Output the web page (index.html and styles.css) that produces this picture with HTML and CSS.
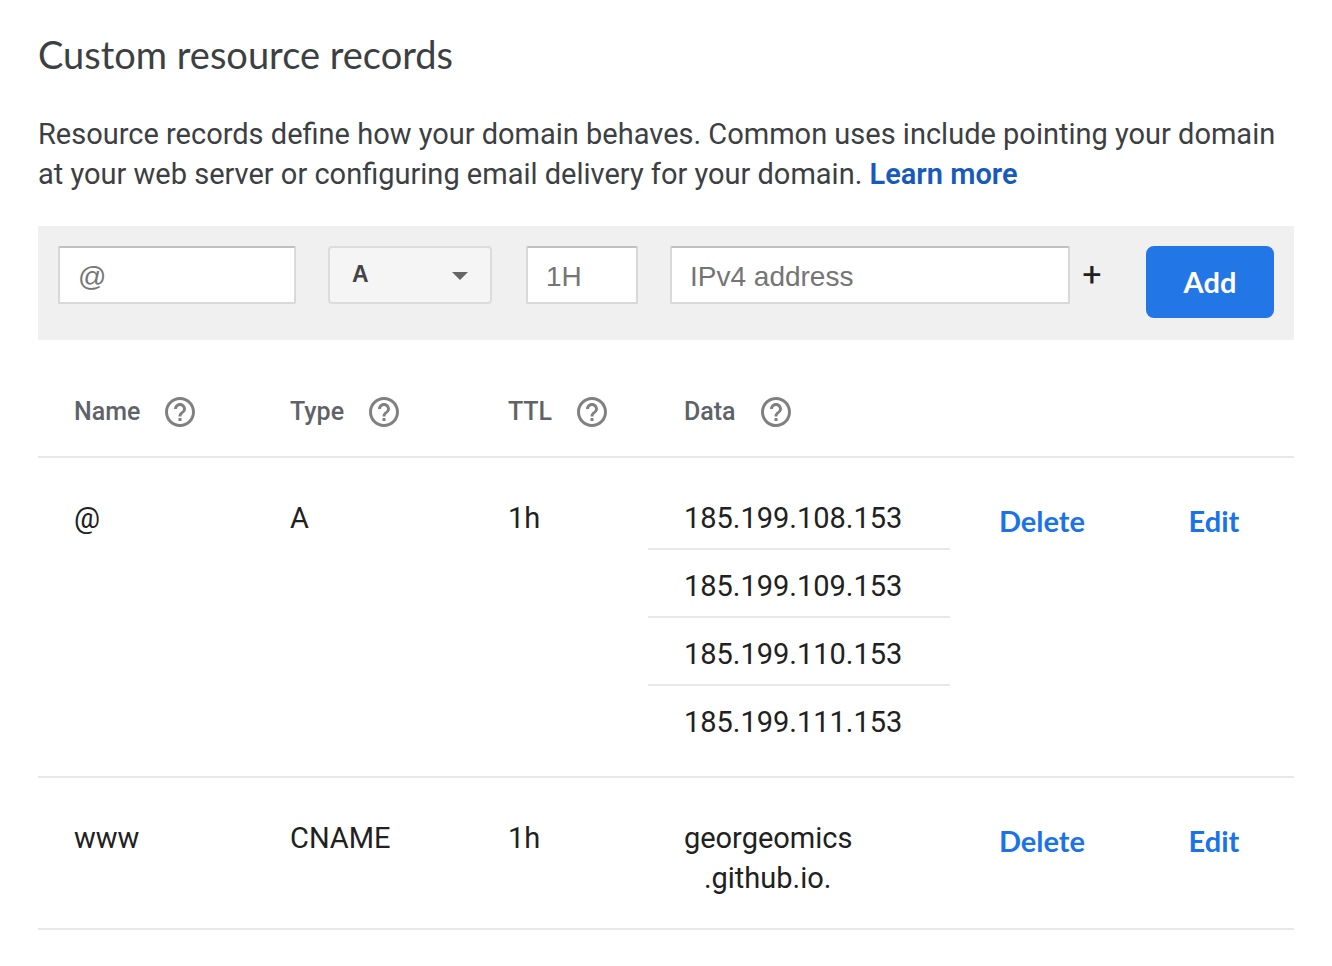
FILE: index.html
```html
<!DOCTYPE html>
<html lang="en">
<head>
<meta charset="utf-8">
<meta name="viewport" content="width=device-width, initial-scale=1">
<title>Custom resource records</title>
<link rel="stylesheet" href="styles.css">
</head>
<body>
<svg class="sprite" aria-hidden="true">
  <symbol id="help" viewBox="0 0 24 24"><path d="M11 18h2v-2h-2v2zm1-16C6.48 2 2 6.48 2 12s4.48 10 10 10 10-4.48 10-10S17.52 2 12 2zm0 18c-4.41 0-8-3.59-8-8s3.59-8 8-8 8 3.59 8 8-3.59 8-8 8zm0-14c-2.21 0-4 1.79-4 4h2c0-1.1.9-2 2-2s2 .9 2 2c0 2-3 1.75-3 5h2c0-2.25 3-2.5 3-5 0-2.21-1.79-4-4-4z"/></symbol>
</svg>
<main class="page">
  <h1 class="title">Custom resource records</h1>
  <p class="intro">Resource records define how your domain behaves. Common uses include pointing your domain at your web server or configuring email delivery for your domain. <a class="intro-link" href="#learn">Learn more</a></p>

  <form class="add-form">
    <input class="field field-name" type="text" placeholder="@" aria-label="Name">
    <div class="select-wrap">
      <select class="select" aria-label="Type">
        <option>A</option>
        <option>AAAA</option>
        <option>CNAME</option>
        <option>MX</option>
        <option>TXT</option>
      </select>
      <svg class="select-arrow" viewBox="0 0 16 8" aria-hidden="true"><path d="M0 0h16L8 8z"/></svg>
    </div>
    <input class="field field-ttl" type="text" placeholder="1H" aria-label="TTL">
    <input class="field field-data" type="text" placeholder="IPv4 address" aria-label="Data">
    <button class="plus" type="button" aria-label="Add another value">+</button>
    <button class="submit" type="submit">Add</button>
  </form>

  <table class="records">
    <colgroup>
      <col class="col-name"><col class="col-type"><col class="col-ttl"><col class="col-data"><col class="col-delete"><col class="col-edit">
    </colgroup>
    <thead>
      <tr>
        <th scope="col"><span class="head">Name <button class="help" type="button" aria-label="About name"><svg class="help-icon"><use href="#help"/></svg></button></span></th>
        <th scope="col"><span class="head">Type <button class="help" type="button" aria-label="About type"><svg class="help-icon"><use href="#help"/></svg></button></span></th>
        <th scope="col"><span class="head">TTL <button class="help" type="button" aria-label="About TTL"><svg class="help-icon"><use href="#help"/></svg></button></span></th>
        <th scope="col"><span class="head">Data <button class="help" type="button" aria-label="About data"><svg class="help-icon"><use href="#help"/></svg></button></span></th>
        <td></td>
        <td></td>
      </tr>
    </thead>
    <tbody>
      <tr>
        <td class="cell">@</td>
        <td class="cell">A</td>
        <td class="cell">1h</td>
        <td class="cell-list">
          <ul class="values">
            <li class="value">185.199.108.153</li>
            <li class="value">185.199.109.153</li>
            <li class="value">185.199.110.153</li>
            <li class="value">185.199.111.153</li>
          </ul>
        </td>
        <td class="cell-action"><button class="action" type="button">Delete</button></td>
        <td class="cell-action"><button class="action" type="button">Edit</button></td>
      </tr>
      <tr>
        <td class="cell">www</td>
        <td class="cell">CNAME</td>
        <td class="cell">1h</td>
        <td class="cell">georgeomics<span class="continued">.github.io.</span></td>
        <td class="cell-action"><button class="action" type="button">Delete</button></td>
        <td class="cell-action"><button class="action" type="button">Edit</button></td>
      </tr>
    </tbody>
  </table>
</main>
</body>
</html>
```
FILE: styles.css
```css
* {
  box-sizing: border-box;
}

body {
  margin: 0;
  background: #fff;
  color: #212121;
  font-family: Roboto, "Liberation Sans", sans-serif;
  font-size: 29px;
  line-height: 40px;
}

button {
  border: 0;
  padding: 0;
  background: none;
  cursor: pointer;
}

.sprite {
  display: none;
}

.page {
  padding: 30px 38px;
}

.title {
  margin: 0 0 36px;
  color: #3c4043;
  font-family: Lato, sans-serif;
  font-size: 38px;
  font-weight: 400;
  line-height: 48px;
}

.intro {
  margin: 0 0 32px;
  padding-right: 16px;
  color: #3c4043;
}

.intro-link {
  color: #185abc;
  font-weight: 600;
  text-decoration: none;
}

.add-form {
  display: flex;
  align-items: flex-start;
  padding: 20px 20px 22px;
  background: #f0f0f0;
}

.field {
  height: 58px;
  min-width: 0;
  padding: 4px 18px 0;
  border: 2px solid #d9d9d9;
  border-top-color: #c0c0c0;
  border-radius: 2px;
  background: #fff;
  color: #212121;
  font-family: "Liberation Sans", Arial, sans-serif;
  font-size: 28px;
}

.field::placeholder {
  color: #757575;
  opacity: 1;
}

.field-name {
  flex: 1 1 238px;
}

.select-wrap {
  position: relative;
  flex: 0 0 164px;
  margin: 0 34px 0 32px;
}

.select {
  display: block;
  width: 100%;
  height: 58px;
  padding: 0 48px 2px 22px;
  border: 2px solid #dcdcdc;
  border-radius: 4px;
  appearance: none;
  background: #f5f5f5;
  color: #444;
  font-family: "Liberation Sans", Arial, sans-serif;
  font-size: 23px;
  font-weight: 700;
}

.select-arrow {
  position: absolute;
  top: 26px;
  right: 24px;
  width: 16px;
  height: 8px;
  fill: #666;
  pointer-events: none;
}

.field-ttl {
  flex: 0 0 112px;
}

.field-data {
  flex: 2 1 400px;
  margin-left: 32px;
}

.plus {
  flex: 0 0 44px;
  margin-right: 32px;
  height: 58px;
  padding-bottom: 2px;
  color: #212121;
  font-family: Roboto, sans-serif;
  font-size: 34px;
  font-weight: 400;
}

.submit {
  flex: 0 0 128px;
  height: 72px;
  padding-bottom: 2px;
  border-radius: 8px;
  background: #2376e5;
  color: #fff;
  font-family: Lato, sans-serif;
  font-size: 29px;
  font-weight: 700;
}

.records {
  width: 100%;
  border-collapse: collapse;
  table-layout: fixed;
}

.col-name { width: 17.2%; }
.col-type { width: 17.35%; }
.col-ttl { width: 14.01%; }
.col-data { width: 24.05%; }
.col-delete { width: 14.65%; }
.col-edit { width: 12.74%; }

.records tr {
  border-bottom: 2px solid #e8e8e8;
}

.records td {
  padding: 0;
  vertical-align: top;
}

.records th {
  padding: 54px 0 26px 36px;
  color: #5f6368;
  font-size: 25px;
  font-weight: 500;
  text-align: left;
}

.head {
  display: flex;
  align-items: center;
  gap: 22px;
  height: 36px;
}

.help {
  display: flex;
}

.help-icon {
  width: 36px;
  height: 36px;
  fill: #808080;
}

.records .cell {
  padding: 40px 0 30px 36px;
}

.records .cell-list {
  padding: 24px 0 22px;
}

.values {
  margin: 0;
  padding: 0;
  list-style: none;
}

.value {
  padding: 16px 0 10px 36px;
  border-bottom: 2px solid #e8e8e8;
}

.value:last-child {
  border-bottom-color: transparent;
}

.continued {
  display: block;
  padding-left: 20px;
}

.records .cell-action {
  padding-top: 40px;
  text-align: center;
}

.action {
  color: #1a73e8;
  font-family: Lato, sans-serif;
  font-size: 29px;
  font-weight: 700;
  line-height: 46px;
}
```
